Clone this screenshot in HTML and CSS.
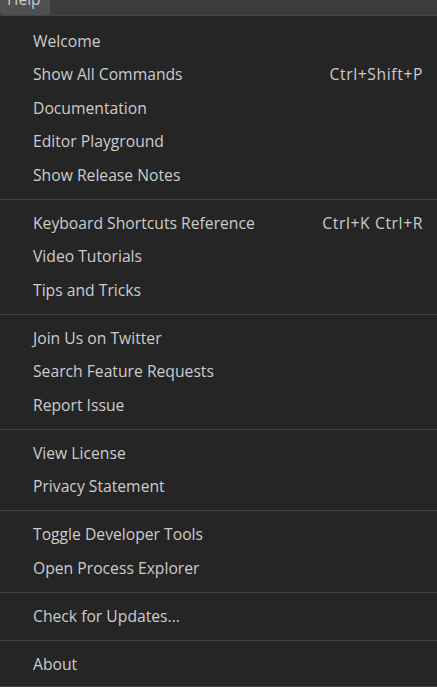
FILE: index.html
```html
<!DOCTYPE html>
<html>
<head>
<meta charset="utf-8">
<link rel="stylesheet" href="styles.css">
</head>
<body>
<div class="menubar">
  <div class="menubar-item">Help</div>
</div>
<div class="menu">
  <div class="item"><span>Welcome</span></div>
  <div class="item"><span>Show All Commands</span><span class="key">Ctrl+Shift+P</span></div>
  <div class="item"><span>Documentation</span></div>
  <div class="item"><span>Editor Playground</span></div>
  <div class="item"><span>Show Release Notes</span></div>
  <div class="sep"></div>
  <div class="item"><span>Keyboard Shortcuts Reference</span><span class="key">Ctrl+K Ctrl+R</span></div>
  <div class="item"><span>Video Tutorials</span></div>
  <div class="item"><span>Tips and Tricks</span></div>
  <div class="sep"></div>
  <div class="item"><span>Join Us on Twitter</span></div>
  <div class="item"><span>Search Feature Requests</span></div>
  <div class="item"><span>Report Issue</span></div>
  <div class="sep"></div>
  <div class="item"><span>View License</span></div>
  <div class="item"><span>Privacy Statement</span></div>
  <div class="sep"></div>
  <div class="item"><span>Toggle Developer Tools</span></div>
  <div class="item"><span>Open Process Explorer</span></div>
  <div class="sep"></div>
  <div class="item"><span>Check for Updates...</span></div>
  <div class="sep"></div>
  <div class="item"><span>About</span></div>
</div>
</body>
</html>
```
FILE: styles.css
```css
html, body {
  margin: 0;
  padding: 0;
  background: #252526;
  height: 100%;
  overflow: hidden;
}
body {
  font-family: "Open Sans", "Noto Sans", sans-serif;
  font-size: 15.7px;
  color: #cccccc;
}
.menubar {
  height: 15px;
  background: #3c3c3c;
  overflow: hidden;
  display: flex;
}
.menubar-item {
  margin-top: -15px;
  height: 30px;
  line-height: 28px;
  padding: 0 9px 0 7px;
  background: #505050;
  border-radius: 4px;
  font-size: 15.5px;
  color: #cccccc;
}
.menu {
  border-top: 1px solid #454545;
  border-bottom: 1px solid #454545;
  padding: 8px 0 0;
  height: 672px;
  box-sizing: border-box;
}
.item {
  height: 33.5px;
  display: flex;
  align-items: center;
  justify-content: space-between;
  padding: 0 14px 0 33px;
}
.key {
  color: #cccccc;
  letter-spacing: 0.6px;
}
.sep {
  height: 1px;
  background: #454545;
  margin: 7px 0 6.5px;
}
```
